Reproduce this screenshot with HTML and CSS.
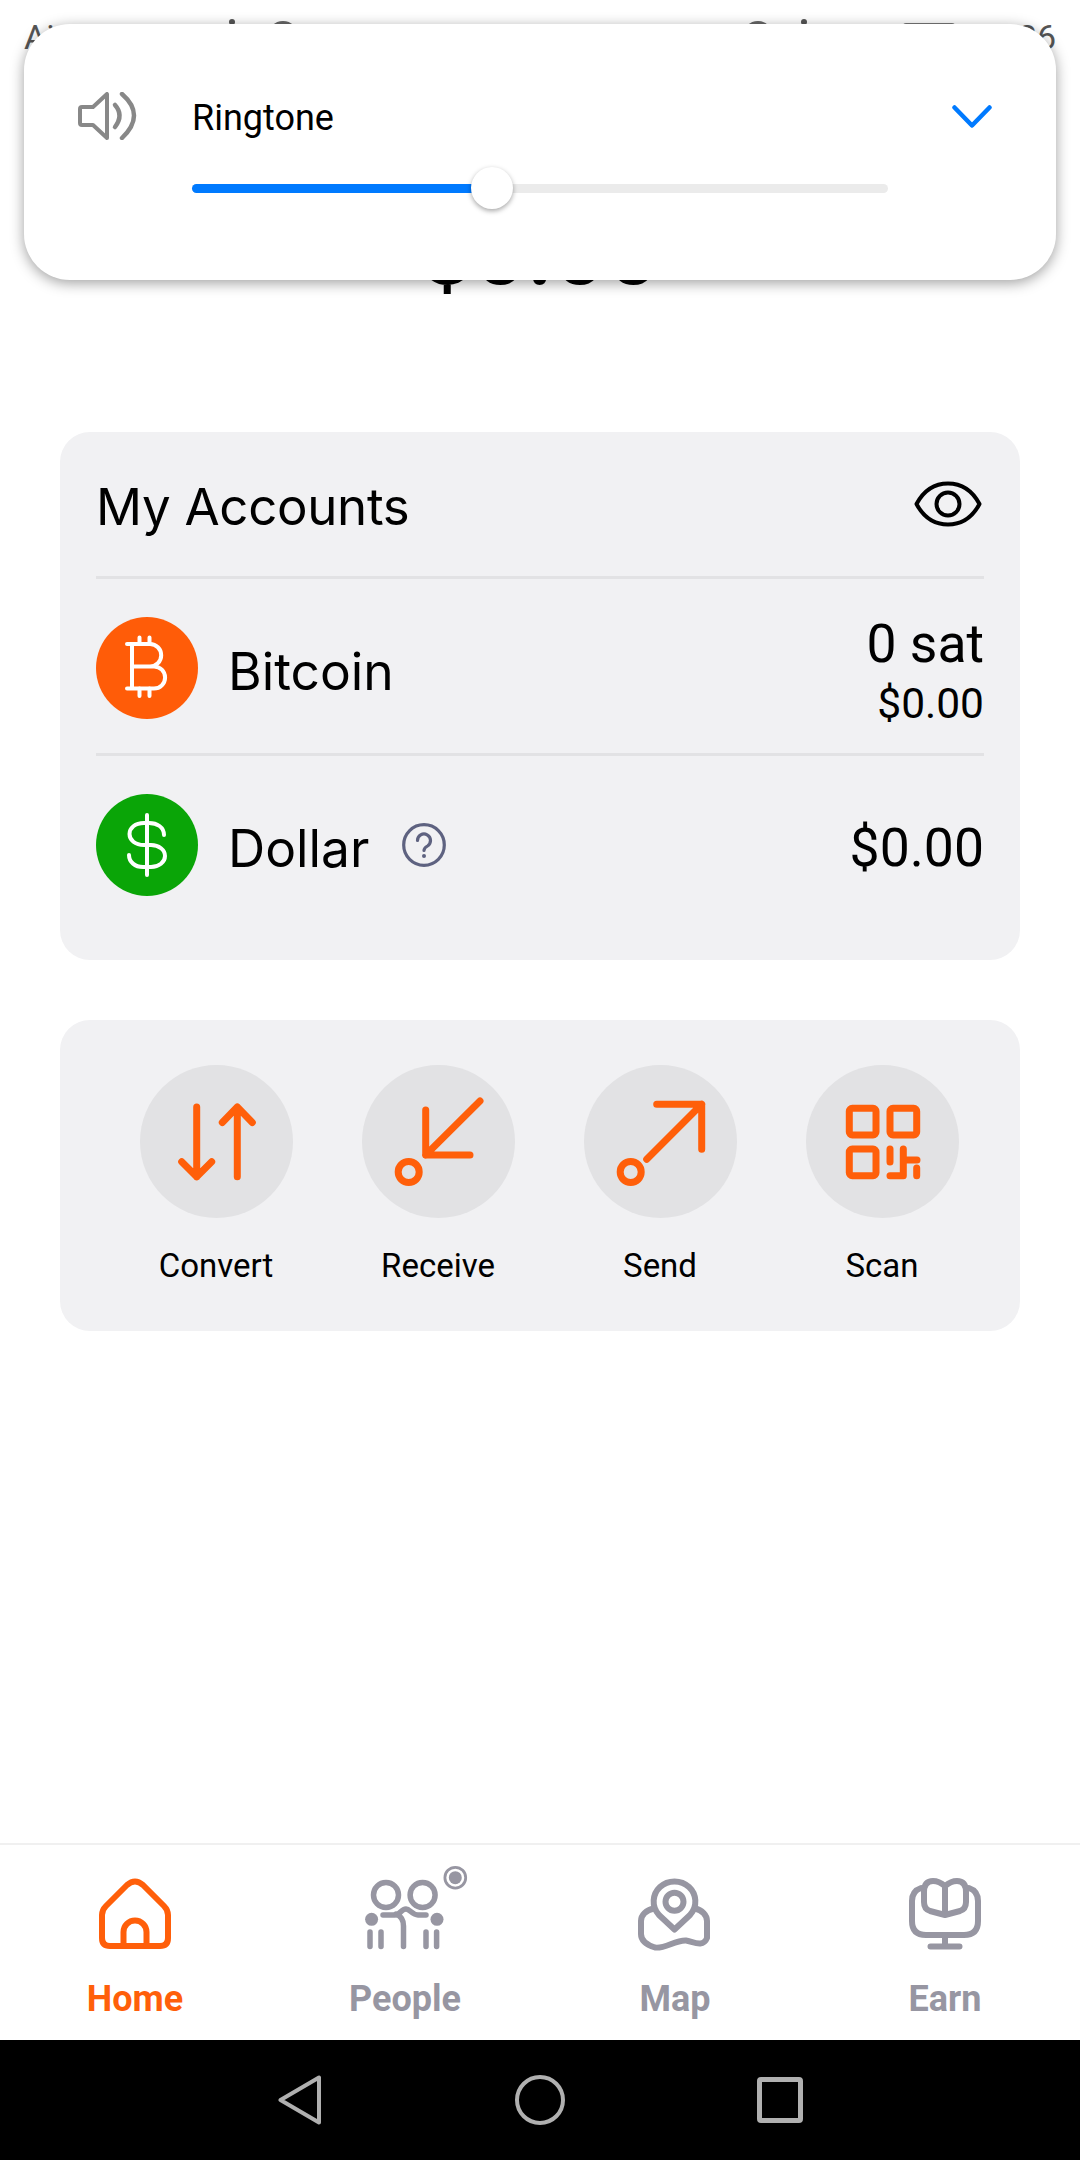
FILE: index.html
```html
<!DOCTYPE html>
<html lang="en">
<head>
    <meta charset="UTF-8">
    <meta name="viewport" content="width=device-width, initial-scale=1.0">
    <title>Wallet</title>
    <link rel="stylesheet" href="styles.css">
</head>
<body>
    <div class="status-bar">
        <span class="carrier">Airtel</span>
        <span class="status-dot status-dot-one"></span>
        <span class="status-arc status-arc-one"></span>
        <span class="status-spacer"></span>
        <span class="status-arc status-arc-two"></span>
        <span class="status-dot status-dot-two"></span>
        <span class="status-battery"></span>
        <span class="clock">10:26</span>
    </div>

    <!-- system volume panel, sits over the top of the app -->
    <div class="volume-panel">
        <svg class="speaker" viewBox="0 0 60 48" fill="none">
            <path d="M2 17 a2 2 0 0 1 2-2 H15 L29 2 V46 L15 33 H4 a2 2 0 0 1-2-2 Z" stroke="#888" stroke-width="4" stroke-linejoin="round"/>
            <path d="M37 13 Q46 23 37 35" stroke="#888" stroke-width="4.5" stroke-linecap="round"/>
            <path d="M44 2 Q68 23 44 46" stroke="#888" stroke-width="4.5" stroke-linecap="round"/>
        </svg>
        <div class="volume-body">
            <div class="volume-label">Ringtone</div>
            <div class="slider">
                <div class="slider-fill"></div>
                <div class="slider-thumb"></div>
            </div>
        </div>
        <svg class="chevron" viewBox="0 0 40 24" fill="none">
            <path d="M2.500 2.500 L20 20.500 L37.500 2.500" stroke="#007aff" stroke-width="4.500" stroke-linecap="round" stroke-linejoin="round"/>
        </svg>
    </div>

    <main class="content">
        <div class="balance">$0.00</div>

        <section class="card accounts">
            <div class="accounts-head">
                <h2>My Accounts</h2>
                <svg class="eye" viewBox="0 0 68 46" fill="none" stroke="#000" stroke-width="4">
                    <path d="M2.500 23 C10 9 21 2.500 34 2.500 C47 2.500 58 9 65.500 23 C58 37 47 43.500 34 43.500 C21 43.500 10 37 2.500 23 Z" stroke-linejoin="round"/>
                    <circle cx="34" cy="23" r="11.500"/>
                </svg>
            </div>
            <div class="account-row">
                <svg class="coin coin-bitcoin" viewBox="0 0 102 102" fill="none" stroke="#fff" stroke-width="4" stroke-linecap="round">
                    <path d="M31 27 H54 a11.200 11.200 0 0 1 0 22.400 H36 M54 49.400 H58 a11.100 11.100 0 0 1 0 22.200 H31 M36 27 V71.600"/>
                    <path d="M43.500 20.500 V27 M53.500 20.500 V27 M43.500 71.600 V79 M53.500 71.600 V79"/>
                </svg>
                <span class="account-name">Bitcoin</span>
                <div class="amounts">
                    <div class="amount-main">0 sat</div>
                    <div class="amount-sub">$0.00</div>
                </div>
            </div>
            <div class="account-row account-row-last">
                <svg class="coin coin-dollar" viewBox="0 0 102 102" fill="none" stroke="#fff" stroke-width="4" stroke-linecap="round">
                    <path d="M51 21 V81"/>
                    <path d="M68 41 C68 33 61 29 53 29 H48 C39 29 33.500 34 33.500 40 C33.500 46 39 51 48 51 H55 C63 51 69 56 69 62 C69 68 63 73 55 73 H47 C39 73 33 68 33 61"/>
                </svg>
                <span class="account-name">Dollar</span>
                <svg class="help" viewBox="0 0 44 44" fill="none" stroke="#5e6280" stroke-width="3.200" stroke-linecap="round">
                    <circle cx="22" cy="22" r="20.300"/>
                    <path d="M15.500 17.500 a6.500 6.500 0 1 1 10 5.500 c-2.500 1.500 -3.500 2.500 -3.500 4.500"/>
                    <circle cx="22" cy="33" r="2" fill="#5e6280" stroke="none"/>
                </svg>
                <div class="amounts">
                    <div class="amount-main">$0.00</div>
                </div>
            </div>
        </section>

        <section class="card actions">
            <div class="action">
                <div class="action-circle">
                    <svg viewBox="0 0 153 153" fill="none" stroke="#ff5f0a" stroke-width="7" stroke-linecap="round" stroke-linejoin="round">
                        <path d="M56.700 42 V111.700 M41.700 96.700 L56.700 111.700 L71.700 96.700"/>
                        <path d="M97.300 111.700 V42 M82.300 57.500 L97.300 42 L112.300 57.500"/>
                    </svg>
                </div>
                <span>Convert</span>
            </div>
            <div class="action">
                <div class="action-circle">
                    <svg viewBox="0 0 153 153" fill="none" stroke="#ff5f0a" stroke-width="7" stroke-linecap="round" stroke-linejoin="round">
                        <path d="M63.700 45 V90 H108 M63.700 90 L118 36"/>
                        <circle cx="46.700" cy="107" r="10.500"/>
                    </svg>
                </div>
                <span>Receive</span>
            </div>
            <div class="action">
                <div class="action-circle">
                    <svg viewBox="0 0 153 153" fill="none" stroke="#ff5f0a" stroke-width="7" stroke-linecap="round" stroke-linejoin="round">
                        <path d="M72.700 39.300 H117.700 V84.300 M117.700 39.300 L62.700 94.300"/>
                        <circle cx="46.700" cy="107" r="10.500"/>
                    </svg>
                </div>
                <span>Send</span>
            </div>
            <div class="action">
                <div class="action-circle">
                    <svg viewBox="0 0 153 153" fill="none" stroke="#ff5f0a" stroke-width="7" stroke-linecap="round" stroke-linejoin="round">
                        <rect x="43.300" y="43.300" width="26.700" height="26.700" rx="3"/>
                        <rect x="84" y="43.300" width="26.700" height="26.700" rx="3"/>
                        <rect x="43.300" y="84" width="26.700" height="26.700" rx="3"/>
                        <path d="M84 84 V97 M97.300 84 V110.700 H84 M97.300 95 H111 M110.700 103 V110.700"/>
                    </svg>
                </div>
                <span>Scan</span>
            </div>
        </section>
    </main>

    <nav class="tabbar">
        <div class="tab tab-active">
            <svg viewBox="0 0 80 80" fill="none" stroke="#ff5f0a" stroke-width="6" stroke-linecap="round" stroke-linejoin="round">
                <path d="M7 64 V41 q0-5 4-9 L32 11 q8-7 16 0 L69 32 q4 4 4 9 V64 q0 8-8 8 H15 q-8 0-8-8 Z"/>
                <path d="M28.500 72 V58 a11.500 11.500 0 0 1 23 0 V72"/>
            </svg>
            <span>Home</span>
        </div>
        <div class="tab">
            <svg viewBox="0 0 80 80" fill="none" stroke="#9796a2" stroke-width="5.500" stroke-linecap="round" stroke-linejoin="round">
                <circle cx="21" cy="21" r="12.500"/>
                <circle cx="57.600" cy="21" r="12.500"/>
                <path d="M18 41 H30 C35 41 36 35 41 35 C45 35 47 41 53 41 H61"/>
                <path d="M31 40 C36 42 38.500 46 38.500 52 V72.500"/>
                <path d="M5 58 V72.500 M16 58 V72.500 M61 58 V72.500 M71.600 58 V72.500"/>
                <circle cx="6.600" cy="45.300" r="6.500" fill="#9796a2" stroke="none"/>
                <circle cx="72" cy="45.300" r="6.500" fill="#9796a2" stroke="none"/>
                <circle cx="90.300" cy="3.700" r="10.400" stroke-width="2.800"/>
                <circle cx="90.300" cy="3.700" r="6.500" fill="#9796a2" stroke="none"/>
            </svg>
            <span>People</span>
        </div>
        <div class="tab">
            <svg viewBox="0 0 80 80" fill="none" stroke="#9796a2" stroke-width="6" stroke-linecap="round" stroke-linejoin="round">
                <path d="M39.500 55.500 L24 41 C16 32 17.500 20 25 13 C33 5.500 46 5.500 54 13 C61.500 20 63 32 55 41 Z"/>
                <circle cx="39.500" cy="27.700" r="9"/>
                <path d="M19 34.500 C11 36 6 41 6 47 V60 C6 67 12 71 20 73.500 C30 75 40 66 51 66.500 C58 67.500 68 74 72 64 V47 C72 41 67 36 60 34.500"/>
            </svg>
            <span>Map</span>
        </div>
        <div class="tab">
            <svg viewBox="0 0 80 80" fill="none" stroke="#9796a2" stroke-width="6" stroke-linecap="round" stroke-linejoin="round">
                <path d="M16 14 Q7 17 7 27 V47 Q7 61 21 61 H59 Q73 61 73 47 V27 Q73 17 64 14"/>
                <path d="M40 12 Q34 7 28 7 Q19 7 19 18 V28 Q19 35 25 37 L40 41 L55 37 Q61 35 61 28 V18 Q61 7 52 7 Q46 7 40 12 Z M40 12 V41"/>
                <path d="M40 61 V72.500 M25.500 72.500 H54.500"/>
            </svg>
            <span>Earn</span>
        </div>
    </nav>

    <div class="android-nav">
        <svg class="nav-back" viewBox="0 0 44 50" fill="none" stroke="#b0b0b0" stroke-width="4" stroke-linejoin="round">
            <path d="M2.500 25 L41 2.500 V47.500 Z"/>
        </svg>
        <div class="nav-home"></div>
        <div class="nav-recent"></div>
    </div>
</body>
</html>
```
FILE: styles.css
```css
* {
    box-sizing: border-box;
}
html, body {
    margin: 0;
    padding: 0;
}
body {
    width: 1080px;
    height: 2160px;
    display: flex;
    flex-direction: column;
    overflow: hidden;
    position: relative;
    background-color: #fff;
    color: #000;
    font-family: Roboto, "Liberation Sans", sans-serif;
}

/* status bar, almost fully hidden by the volume panel */
.status-bar {
    height: 64px;
    flex: none;
    display: flex;
    align-items: flex-start;
    padding: 17px 24px 0 24px;
    color: #555;
    font-size: 34px;
    line-height: 40px;
}
.carrier {
    width: 205px;
}
.status-dot {
    width: 6px;
    height: 6px;
    margin-top: 2px;
    border-radius: 50%;
    background-color: #555;
}
.status-dot-two {
    margin-left: 28px;
}
.status-arc {
    width: 30px;
    height: 30px;
    margin-top: 4px;
    border-radius: 50%;
    background-color: #666;
}
.status-arc-one {
    margin-left: 33px;
}
.status-spacer {
    flex: 1;
}
.status-battery {
    width: 52px;
    height: 30px;
    margin-top: 6px;
    margin-left: 96px;
    border-radius: 3px;
    background-color: #777;
}
.clock {
    margin-left: 16px;
}

.volume-panel {
    position: absolute;
    left: 24px;
    top: 24px;
    width: 1032px;
    height: 256px;
    display: flex;
    align-items: flex-start;
    padding: 68px 64px 0 54px;
    background-color: #fff;
    border-radius: 46px;
    box-shadow: 0 3px 14px rgba(0, 0, 0, 0.38);
}
.speaker {
    width: 60px;
    height: 48px;
    flex: none;
}
.volume-body {
    width: 695px;
    flex: none;
    margin-left: 55px;
}
.volume-label {
    font-size: 36px;
    line-height: 40px;
    margin-top: 6px;
    margin-left: -1px;
}
.slider {
    position: relative;
    height: 9px;
    margin: 46px 0 0 -1px;
    background-color: #ebebeb;
    border-radius: 5px;
}
.slider-fill {
    width: 290px;
    height: 9px;
    background-color: #007aff;
    border-radius: 5px 0 0 5px;
}
.slider-thumb {
    position: absolute;
    left: 279px;
    top: -17px;
    width: 42px;
    height: 42px;
    background-color: #fff;
    border-radius: 50%;
    box-shadow: 0 2px 5px rgba(0, 0, 0, 0.35);
}
.chevron {
    width: 40px;
    height: 24px;
    flex: none;
    margin-left: 64px;
    margin-top: 13px;
}

.content {
    flex: 1;
    padding: 0 60px;
}
.balance {
    height: 368px;
    font-size: 94px;
    font-weight: 500;
    line-height: 112px;
    padding-top: 132px;
    text-align: center;
}
.card {
    background-color: #f1f1f3;
    border-radius: 30px;
}
.accounts {
    height: 528px;
    padding: 0 36px;
}
.accounts-head {
    height: 147px;
    display: flex;
    align-items: center;
    justify-content: space-between;
    border-bottom: 3px solid #e2e2e4;
}
.accounts-head h2 {
    margin: 4px 0 0 0;
    font-size: 51px;
    font-weight: 400;
    font-family: Inter, Roboto, sans-serif;
    letter-spacing: -0.3px;
}
.eye {
    width: 68px;
    height: 46px;
    margin-right: 2px;
}
.account-row {
    height: 177px;
    display: flex;
    align-items: center;
    padding: 38px 0 34px 0;
    border-bottom: 3px solid #e2e2e4;
}
.account-row-last {
    height: 174px;
    border-bottom: none;
}
.coin {
    width: 102px;
    height: 102px;
    flex: none;
    border-radius: 50%;
}
.coin-bitcoin {
    background-color: #ff5c08;
}
.coin-dollar {
    background-color: #0aa507;
}
.account-name {
    margin: 5px 0 0 30px;
    font-size: 51.5px;
    font-family: Inter, Roboto, sans-serif;
}
.help {
    width: 44px;
    height: 44px;
    margin-left: 33px;
}
.amounts {
    margin: 5px 0 0 auto;
    text-align: right;
}
.amount-main {
    font-size: 53.5px;
    line-height: 60px;
}
.amount-sub {
    margin-top: 6px;
    font-size: 42.5px;
    line-height: 48px;
}

.actions {
    height: 311px;
    margin-top: 60px;
    display: grid;
    grid-template-columns: repeat(4, 222px);
    padding: 45px 0 0 45px;
}
.action {
    display: flex;
    flex-direction: column;
    align-items: center;
    font-size: 33px;
}
.action-circle {
    width: 153px;
    height: 153px;
    margin-bottom: 28px;
    border-radius: 50%;
    background-color: #e2e2e4;
}
.action-circle svg {
    display: block;
    width: 153px;
    height: 153px;
}

.tabbar {
    height: 197px;
    flex: none;
    display: grid;
    grid-template-columns: repeat(4, 270px);
    border-top: 2px solid #f0f0f0;
}
.tab {
    display: flex;
    flex-direction: column;
    align-items: center;
    padding-top: 29px;
    color: #9796a2;
    font-size: 36px;
    font-weight: 700;
    line-height: 40px;
}
.tab svg {
    width: 80px;
    height: 80px;
    margin-bottom: 25px;
    overflow: visible;
}
.tab-active {
    color: #ff5f0a;
}

.android-nav {
    height: 120px;
    flex: none;
    display: flex;
    align-items: center;
    background-color: #000;
    padding-left: 278px;
}
.nav-back {
    width: 44px;
    height: 50px;
}
.nav-home {
    width: 50px;
    height: 50px;
    margin-left: 193px;
    border: 4px solid #b0b0b0;
    border-radius: 50%;
}
.nav-recent {
    width: 46px;
    height: 46px;
    margin-left: 192px;
    border: 5px solid #b0b0b0;
    border-radius: 4px;
}
```
